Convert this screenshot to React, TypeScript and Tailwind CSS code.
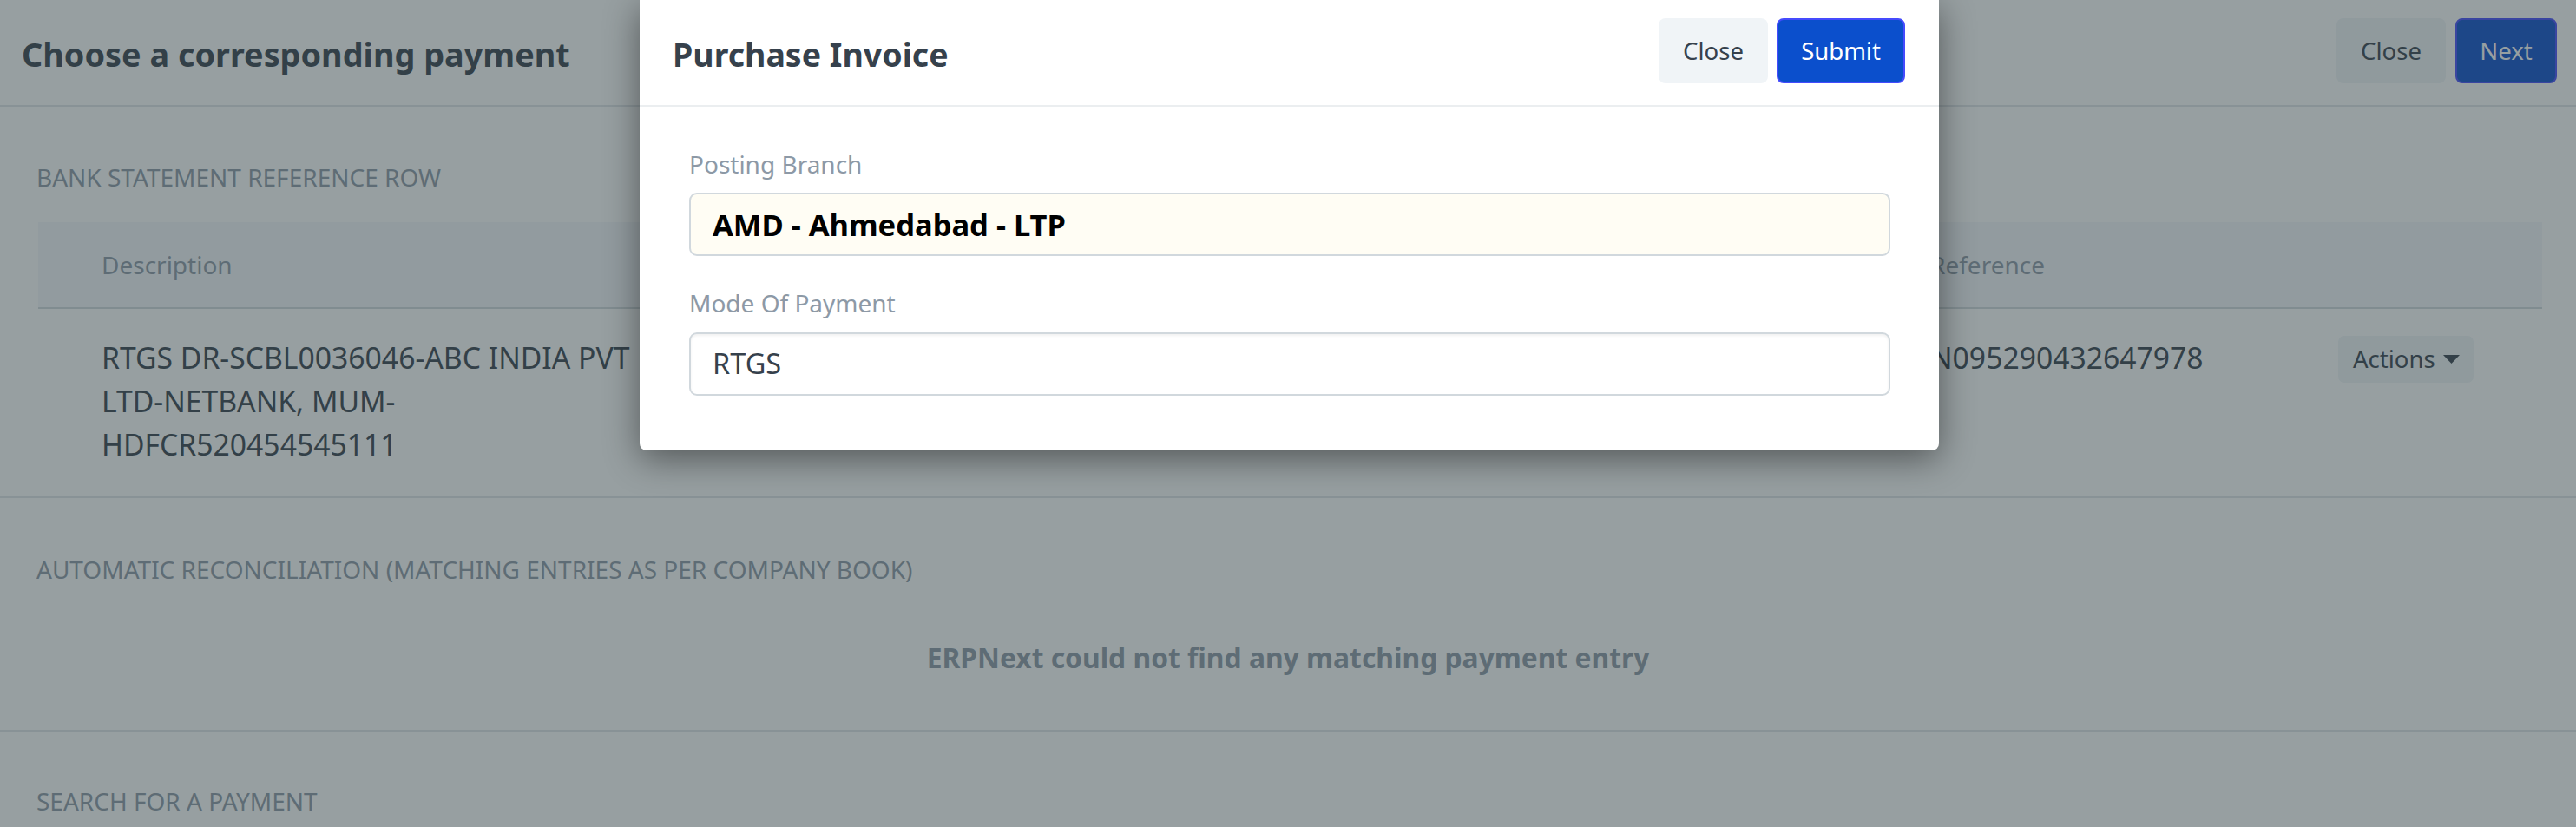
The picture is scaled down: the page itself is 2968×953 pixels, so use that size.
import React from "react";

const labelCls = "text-[28px] leading-[36px] uppercase text-[#8d99a6]";

function Caret() {
  return (
    <svg width="19" height="10" viewBox="0 0 19 10" className="shrink-0">
      <polygon points="0,0 19,0 9.5,10" fill="#36414c" />
    </svg>
  );
}

export default function App() {
  return (
    <div className="relative h-[953px] overflow-hidden bg-white font-['Noto_Sans',sans-serif] text-[#36414c]">
      {/* Page behind the dialog */}
      <header className="flex h-[123px] items-start justify-between border-b-2 border-[#e0e4e8] pl-[25px] pr-[22px]">
        <h1 className="mt-[39px] text-[37.8px] font-bold leading-[48px]">Choose a corresponding payment</h1>
        <div className="mt-[21px] flex gap-[11px]">
          <button className="h-[75px] w-[126px] rounded-[8px] bg-[#f0f4f7] text-[27.5px]">Close</button>
          <button className="h-[75px] w-[117px] rounded-[8px] border-2 border-[#454bfd] bg-[#0b4fcc] text-[27.5px] text-white">
            Next
          </button>
        </div>
      </header>

      <section className="border-b-2 border-[#e0e4e8] pl-[42px] pr-[39px] pt-[63px]">
        <div className={labelCls}>Bank Statement Reference Row</div>
        <div className="ml-[2px] mt-[34px]">
          <div className="grid h-[100px] grid-cols-[698px_1fr_470px_235px] items-center border-b-2 border-[#d1d8dd] bg-[#f5f7fa] text-[28px] leading-[36px] text-[#8d99a6]">
            <div className="pl-[73px]">Description</div>
            <div />
            <div>Reference</div>
            <div />
          </div>
          <div className="grid grid-cols-[698px_1fr_470px_235px] items-start pb-[35px] pt-[31px] text-[33.7px] leading-[50px]">
            <div className="pl-[73px]">RTGS DR-SCBL0036046-ABC INDIA PVT LTD-NETBANK, MUM-HDFCR520454545111</div>
            <div />
            <div>N095290432647978</div>
            <div>
              <button className="flex h-[54px] w-[156px] items-center gap-[9px] rounded-[7px] bg-[#f0f4f7] pl-[17px] text-[27.5px]">
                Actions
                <Caret />
              </button>
            </div>
          </div>
        </div>
      </section>

      <section className="border-b-2 border-[#e0e4e8] px-[42px] pb-[63px] pt-[64px]">
        <div className={labelCls}>Automatic Reconciliation (Matching entries as per company book)</div>
        <div className="mt-[64px] text-center text-[31.8px] font-bold leading-[40px] text-[#8d99a6]">
          ERPNext could not find any matching payment entry
        </div>
      </section>

      <section className="px-[42px] pt-[62px]">
        <div className={labelCls}>Search for a payment</div>
      </section>

      {/* Backdrop */}
      <div className="absolute inset-0 bg-[rgba(47,63,67,0.5)]" />

      {/* Dialog */}
      <div className="absolute left-[737px] top-0 w-[1497px] rounded-b-[8px] bg-white shadow-[0_10px_40px_rgba(0,0,0,0.45)]">
        <div className="flex h-[123px] items-start justify-between border-b-2 border-[#ebeef0] pl-[38px] pr-[39px]">
          <h2 className="mt-[39px] text-[37.5px] font-bold leading-[48px]">Purchase Invoice</h2>
          <div className="mt-[21px] flex gap-[10px]">
            <button className="h-[75px] w-[126px] rounded-[8px] bg-[#f0f4f7] text-[27.5px]">Close</button>
            <button className="h-[75px] w-[148px] rounded-[8px] border-2 border-[#454bfd] bg-[#0b4fcc] text-[27.5px] text-white">
              Submit
            </button>
          </div>
        </div>
        <div className="pb-[63px] pl-[57px] pr-[56px] pt-[48px]">
          <div className="text-[28px] leading-[36px] text-[#8d99a6]">Posting Branch</div>
          <div className="mt-[15px] flex h-[73px] items-center rounded-[9px] border-2 border-[#d1d8dd] bg-[#fffdf4] pl-[25px] text-[34.5px] font-bold text-black">
            AMD - Ahmedabad - LTP
          </div>
          <div className="mt-[36px] text-[28px] leading-[36px] text-[#8d99a6]">Mode Of Payment</div>
          <div className="mt-[16px] flex h-[73px] items-center rounded-[9px] border-2 border-[#d1d8dd] bg-white pl-[25px] text-[32.5px] shadow-[inset_0_2px_3px_rgba(0,0,0,0.06)]">
            RTGS
          </div>
        </div>
      </div>
    </div>
  );
}
